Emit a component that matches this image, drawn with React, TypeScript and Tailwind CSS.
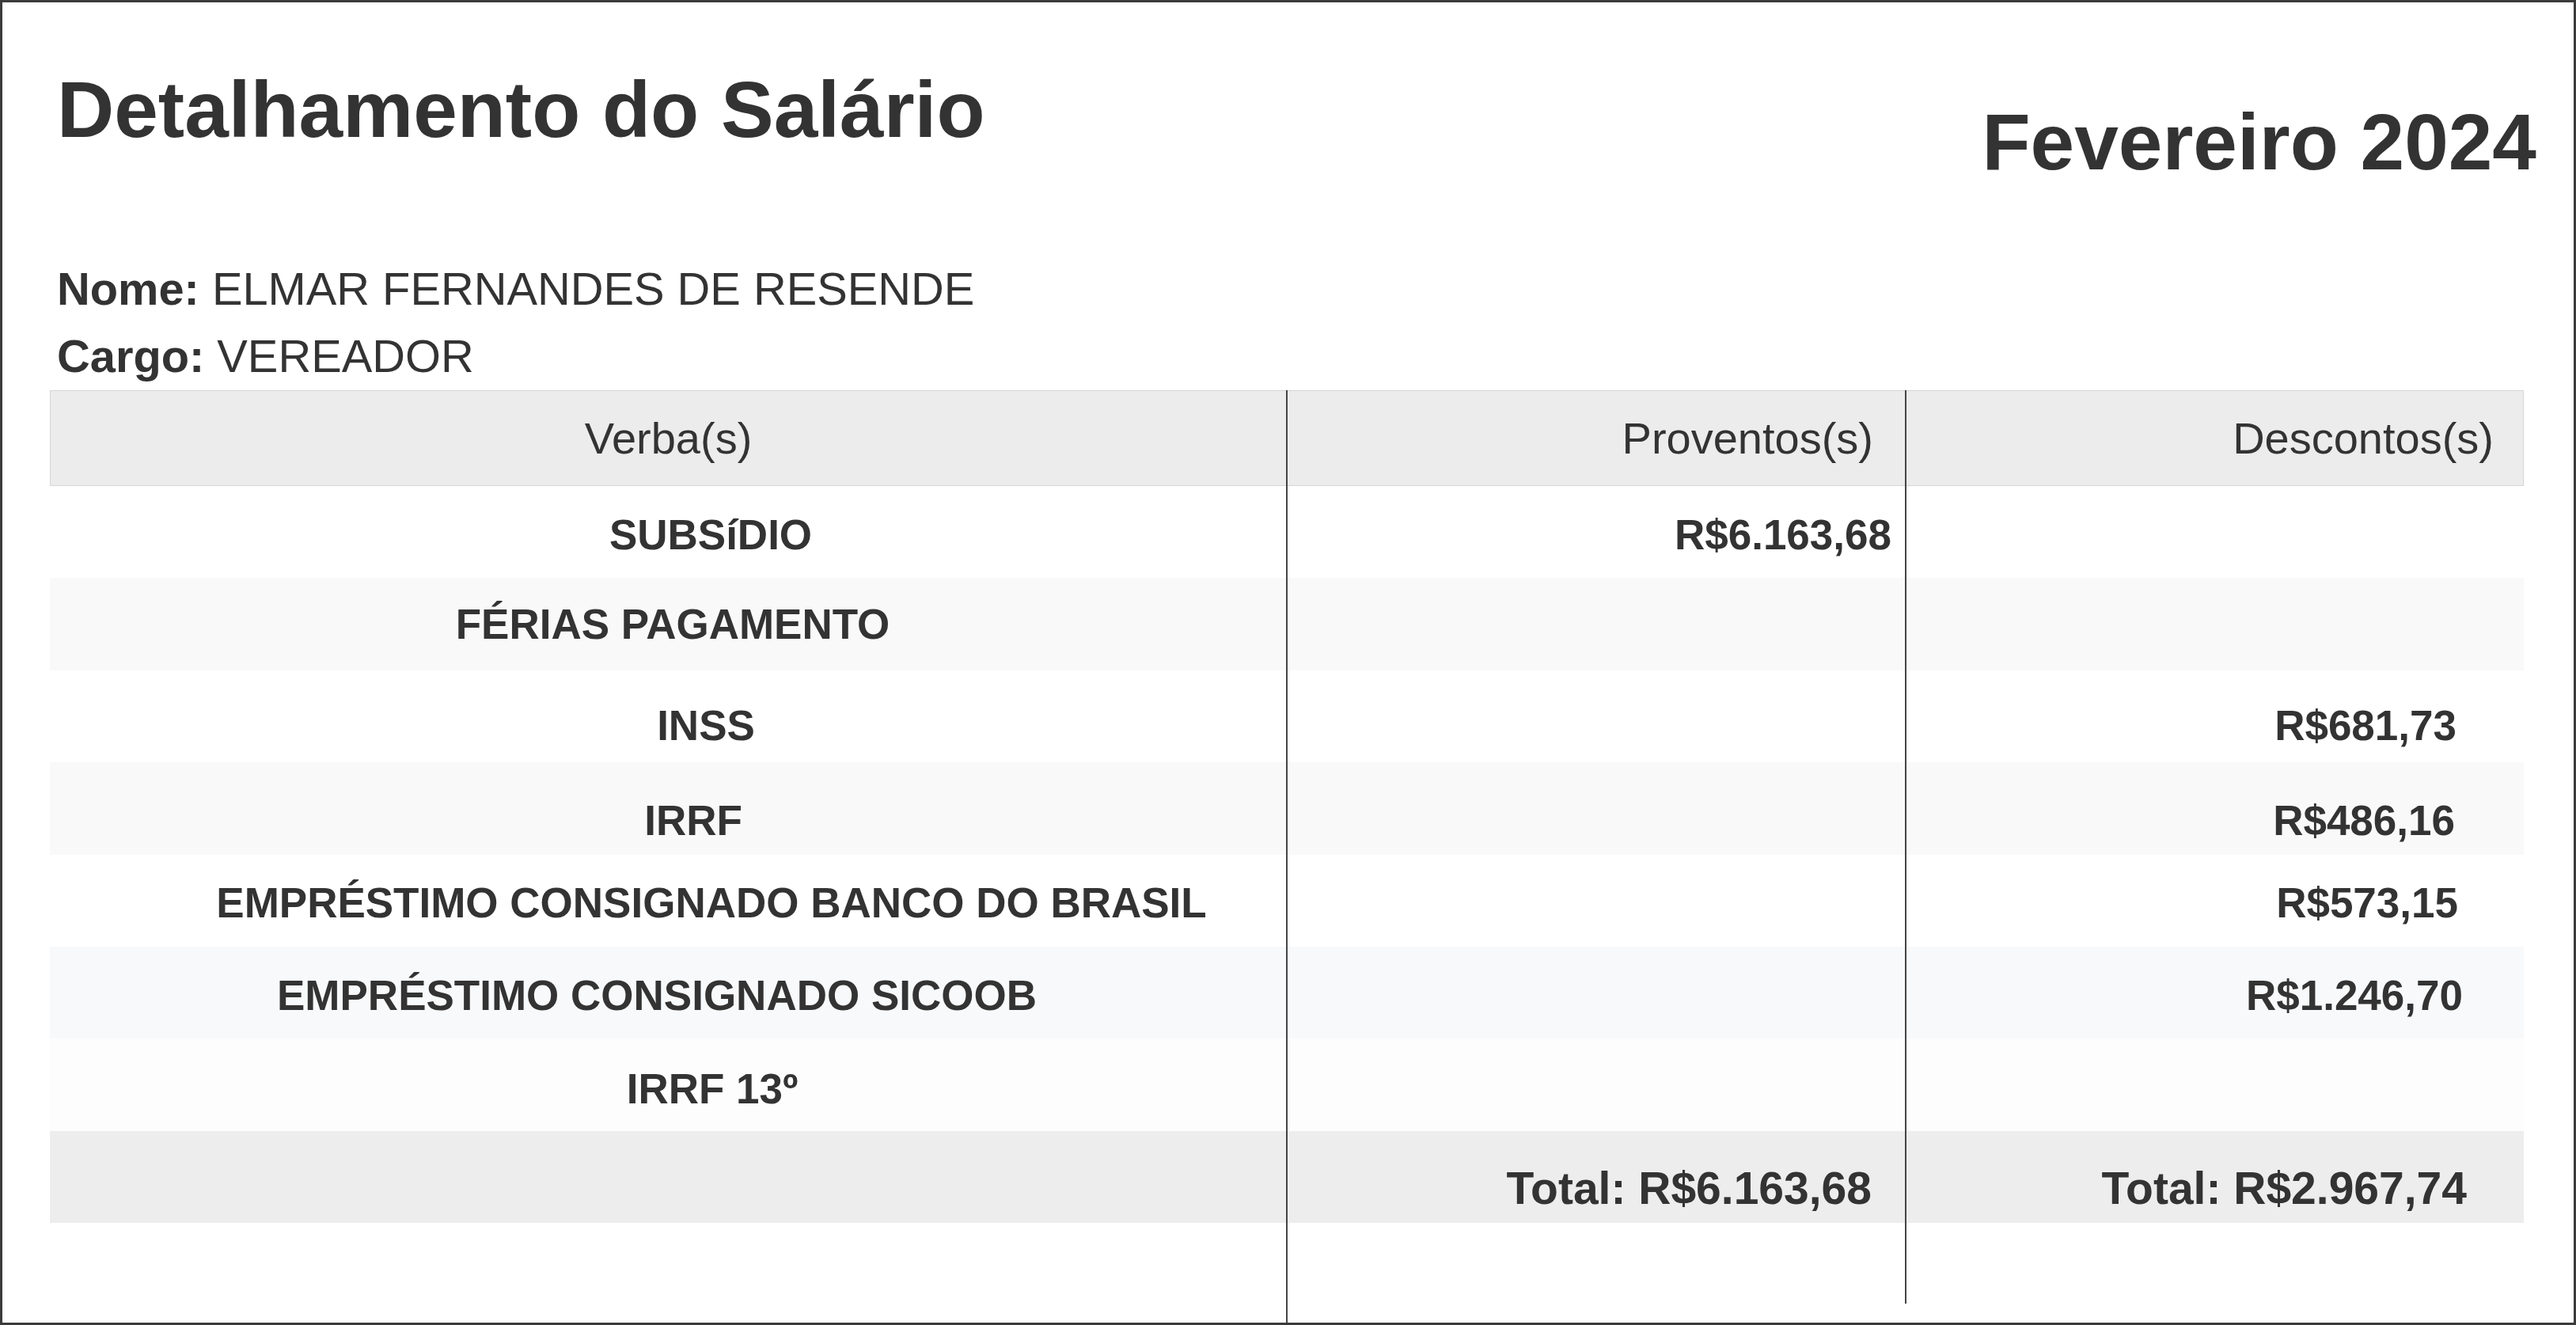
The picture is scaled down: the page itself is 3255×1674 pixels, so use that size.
import React from "react";

type Row = {
  label: string;
  prov: string;
  desc: string;
  bg: string;
  pad: string; // vertical offset class
  lab: string; // horizontal offset for label
  provPad: string;
  descPad: string;
};

const rows: Row[] = [
  { label: "SUBSíDIO", prov: "R$6.163,68", desc: "", bg: "bg-white", pad: "pt-[8px]", lab: "pl-[108px]", provPad: "pr-[17px]", descPad: "pr-[85px]" },
  { label: "FÉRIAS PAGAMENTO", prov: "", desc: "", bg: "bg-[#f9f9f9]", pad: "pt-0", lab: "pl-[12px]", provPad: "pr-[17px]", descPad: "pr-[85px]" },
  { label: "INSS", prov: "", desc: "R$681,73", bg: "bg-white", pad: "pt-[24px]", lab: "pl-[96px]", provPad: "pr-[17px]", descPad: "pr-[85px]" },
  { label: "IRRF", prov: "", desc: "R$486,16", bg: "bg-[#f9f9f9]", pad: "pt-[30px]", lab: "pl-[64px]", provPad: "pr-[17px]", descPad: "pr-[87px]" },
  { label: "EMPRÉSTIMO CONSIGNADO BANCO DO BRASIL", prov: "", desc: "R$573,15", bg: "bg-white", pad: "pt-[6px]", lab: "pl-[110px]", provPad: "pr-[17px]", descPad: "pr-[83px]" },
  { label: "EMPRÉSTIMO CONSIGNADO SICOOB", prov: "", desc: "R$1.246,70", bg: "bg-[#f8f9fa]", pad: "pt-[8px]", lab: "pr-[28px]", provPad: "pr-[17px]", descPad: "pr-[77px]" },
  { label: "IRRF 13º", prov: "", desc: "", bg: "bg-[#fdfdfd]", pad: "pt-[10px]", lab: "pl-[112px]", provPad: "pr-[17px]", descPad: "pr-[85px]" },
];

function Cell({
  children,
  className,
}: {
  children?: React.ReactNode;
  className: string;
}) {
  return <div className={`flex h-[116.4px] items-center ${className}`}>{children}</div>;
}

export default function App() {
  return (
    <div className="flex h-[1674px] w-full flex-col border-[3px] border-[#3b3b3b] bg-white font-['Liberation_Sans',Arial,sans-serif] text-[#333]">
      <div className="flex justify-between pl-[69px] pr-[47px] pt-[85px]">
        <h1 className="text-[100px] font-bold leading-[100px]">Detalhamento do Salário</h1>
        <h2 className="mt-[41px] text-[100px] font-bold leading-[100px]">Fevereiro 2024</h2>
      </div>

      <div className="mt-[94px] pl-[69px] text-[57.8px] leading-[85px]">
        <p>
          <span className="font-bold">Nome:</span> ELMAR FERNANDES DE RESENDE
        </p>
        <p>
          <span className="font-bold">Cargo:</span> VEREADOR
        </p>
      </div>

      <div className="flex flex-1 pl-[60px] pr-[63px]">
        {/* Column 1: Verba(s) */}
        <div className="flex w-[1564px] flex-col border-r-2 border-[#454545]">
          <div className="flex h-[121px] items-center justify-center border-y border-l border-[#d5d5d5] bg-[#ececec] text-[56px]">
            Verba(s)
          </div>
          {rows.map((r, i) => (
            <Cell key={i} className={`${r.bg} ${r.pad} justify-center`}>
              <span className={`${r.lab} text-[53px] font-bold`}>{r.label}</span>
            </Cell>
          ))}
          <Cell className="bg-[#ededed]"> </Cell>
        </div>

        {/* Column 2: Proventos(s) */}
        <div className="mb-[24px] flex w-[782px] flex-col border-r-2 border-[#454545]">
          <div className="flex h-[121px] items-center justify-end border-y border-[#d5d5d5] bg-[#ececec] pr-[40px] text-[56px]">
            Proventos(s)
          </div>
          {rows.map((r, i) => (
            <Cell key={i} className={`${r.bg} ${r.pad} ${r.provPad} justify-end`}>
              <span className="text-[53px] font-bold">{r.prov}</span>
            </Cell>
          ))}
          <Cell className="justify-end bg-[#ededed] pt-[30px] pr-[42px]">
            <span className="text-[57px] font-bold">Total: R$6.163,68</span>
          </Cell>
        </div>

        {/* Column 3: Descontos(s) */}
        <div className="flex w-[780px] flex-col">
          <div className="flex h-[121px] items-center justify-end border-y border-r border-[#d5d5d5] bg-[#ececec] pr-[37px] text-[56px]">
            Descontos(s)
          </div>
          {rows.map((r, i) => (
            <Cell key={i} className={`${r.bg} ${r.pad} ${r.descPad} justify-end`}>
              <span className="text-[53px] font-bold">{r.desc}</span>
            </Cell>
          ))}
          <Cell className="justify-end bg-[#ededed] pt-[30px] pr-[72px]">
            <span className="text-[57px] font-bold">Total: R$2.967,74</span>
          </Cell>
        </div>
      </div>
    </div>
  );
}
